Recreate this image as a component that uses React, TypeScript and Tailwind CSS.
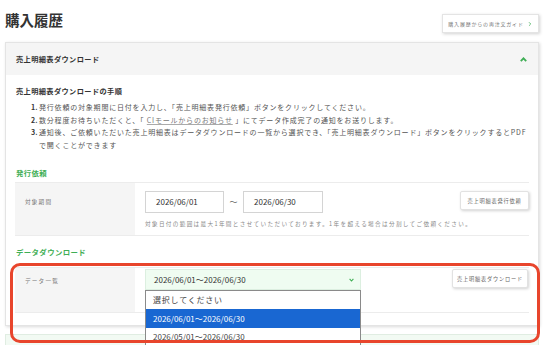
import { ChevronRight } from "lucide-react"

function ChevronUp() {
  return (
    <svg width="7" height="5" viewBox="0 0 7 5" className="block">
      <path d="M0.8 4.2 L3.5 1.3 L6.2 4.2" fill="none" stroke="#3fae55" strokeWidth="1.8" />
    </svg>
  )
}

function ChevronDown() {
  return (
    <svg width="5" height="4" viewBox="0 0 5 4" className="block">
      <path d="M0.6 0.8 L2.5 3 L4.4 0.8" fill="none" stroke="#3fae55" strokeWidth="1.1" />
    </svg>
  )
}

function SmallButton({ label, className = "" }: { label: string; className?: string }) {
  return (
    <button
      className={
        "h-[19px] shrink-0 bg-white border border-[#e2e2e2] rounded-[2px] shadow-[1px_1px_3px_rgba(0,0,0,0.18)] text-[5.2px] tracking-[0.8px] text-[#666] flex items-center justify-center leading-none " +
        className
      }
    >
      {label}
    </button>
  )
}

export default function App() {
  return (
    <div className="relative h-[345px] w-[544px] overflow-hidden bg-white font-['Noto_Sans_CJK_JP','Noto_Sans',sans-serif] text-[#444]">
      <div className="px-[5px]">
        <div className="flex h-[42px] items-start justify-between pt-[10px]">
          <h1 className="text-[14.5px] font-bold leading-[20px] text-[#333]">購入履歴</h1>
          <button className="mt-[4px] flex h-[19px] w-[97px] items-center justify-center gap-[3px] bg-white border border-[#e4e4e4] shadow-[1px_1px_3px_rgba(0,0,0,0.18)] text-[5px] tracking-[0.8px] text-[#777] leading-none">
            購入履歴からの再注文ガイド
            <ChevronRight size={6} strokeWidth={3} color="#3fae55" />
          </button>
        </div>

        <div className="border border-[#e4e4e4] bg-white shadow-[1px_1px_3px_rgba(0,0,0,0.15)]">
          <div className="flex h-[32px] items-center justify-between bg-[#f5f5f5] pl-[10px] pr-[11px]">
            <span className="text-[7.2px] font-bold tracking-[0.4px] text-[#333]">売上明細表ダウンロード</span>
            <ChevronUp />
          </div>

          <div className="px-[9px] pb-[12px] pt-[10px]">
            <p className="pl-[1px] text-[7.2px] font-bold leading-[12px] tracking-[0.4px] text-[#333]">売上明細表ダウンロードの手順</p>
            <ol className="mt-[4px] pl-[16px] text-[7px] leading-[12.5px] tracking-[0.8px] text-[#555]">
              <li className="flex">
                <span className="w-[8px] shrink-0 font-bold tracking-normal text-[#333]">1.</span>
                <span>発行依頼の対象期間に日付を入力し、「売上明細表発行依頼」ボタンをクリックしてください。</span>
              </li>
              <li className="flex">
                <span className="w-[8px] shrink-0 font-bold tracking-normal text-[#333]">2.</span>
                <span>
                  数分程度お待ちいただくと、「 <span className="text-[#777] underline decoration-[#aaa]">CIモールからのお知らせ</span> 」にてデータ作成完了の通知をお送りします。
                </span>
              </li>
              <li className="flex">
                <span className="w-[8px] shrink-0 font-bold tracking-normal text-[#333]">3.</span>
                <span className="w-[490px]">
                  通知後、ご依頼いただいた売上明細表はデータダウンロードの一覧から選択でき、「売上明細表ダウンロード」ボタンをクリックするとPDFで開くことができます
                </span>
              </li>
            </ol>

            <p className="mt-[16px] pl-[1px] text-[7.4px] font-bold leading-[12px] tracking-[0.4px] text-[#3fae55]">発行依頼</p>
            <div className="mt-[3px] flex h-[54px] border-y border-[#ececec]">
              <div className="w-[120px] shrink-0 bg-[#f5f5f5] pl-[10px] pt-[14px] text-[5.6px] leading-[10px] tracking-[1.2px] text-[#777]">
                対象期間
              </div>
              <div className="flex flex-1 justify-between pl-[10px] pt-[8px]">
                <div className="w-[180px]">
                  <div className="flex items-center">
                    <div className="flex h-[22px] w-[79px] items-center border border-[#d4d4d4] pl-[10px] text-[8px] text-[#333]">2026/06/01</div>
                    <span className="w-[19px] text-center text-[8px] text-[#666]">～</span>
                    <div className="flex h-[22px] w-[80px] items-center border border-[#d4d4d4] pl-[10px] text-[8px] text-[#333]">2026/06/30</div>
                  </div>
                  <p className="mt-[7px] whitespace-nowrap text-[5.6px] leading-[8px] tracking-[1.35px] text-[#888]">
                    対象日付の範囲は最大1年間とさせていただいております。1年を超える場合は分割してご依頼ください。
                  </p>
                </div>
                <SmallButton label="売上明細表発行依頼" className="w-[69px]" />
              </div>
            </div>

            <p className="mt-[10px] pl-[1px] text-[7.4px] font-bold leading-[12px] tracking-[0.4px] text-[#3fae55]">データダウンロード</p>
            <div className="mt-[9px] flex h-[46px] border-y border-[#ececec]">
              <div className="w-[120px] shrink-0 bg-[#f5f5f5] pl-[10px] pt-[8px] text-[5.6px] leading-[10px] tracking-[1.2px] text-[#777]">
                データ一覧
              </div>
              <div className="flex flex-1 justify-between pl-[10px] pr-[1px] pt-[1px]">
                <div className="relative h-[21px] w-[216px]">
                  <div className="flex h-[21px] items-center justify-between border border-[#dcefe0] bg-[#effcf1] pl-[8px] pr-[6px] text-[8px] text-[#333]">
                    <span>2026/06/01～2026/06/30</span>
                    <ChevronDown />
                  </div>
                  <ul className="absolute left-0 top-full z-10 w-[216px] border border-[#8a8a8a] bg-white text-[8px] text-[#444]">
                    <li className="flex h-[18px] items-center pl-[7px] tracking-[0.8px]">選択してください</li>
                    <li className="flex h-[19px] items-center bg-[#1967d2] pl-[7px] text-white">2026/06/01～2026/06/30</li>
                    <li className="flex h-[17px] items-center pl-[7px]">2026/05/01～2026/06/30</li>
                  </ul>
                </div>
                <SmallButton label="売上明細表ダウンロード" className="w-[76px]" />
              </div>
            </div>
          </div>
        </div>

        <div className="mt-[8px] h-[30px] border border-[#e0ede2] bg-[#f2faf3]" />
      </div>

      <div className="pointer-events-none absolute left-[10px] top-[263px] z-20 h-[80px] w-[530px] rounded-[10px] border-[3px] border-[#e8452c]" />
    </div>
  )
}
